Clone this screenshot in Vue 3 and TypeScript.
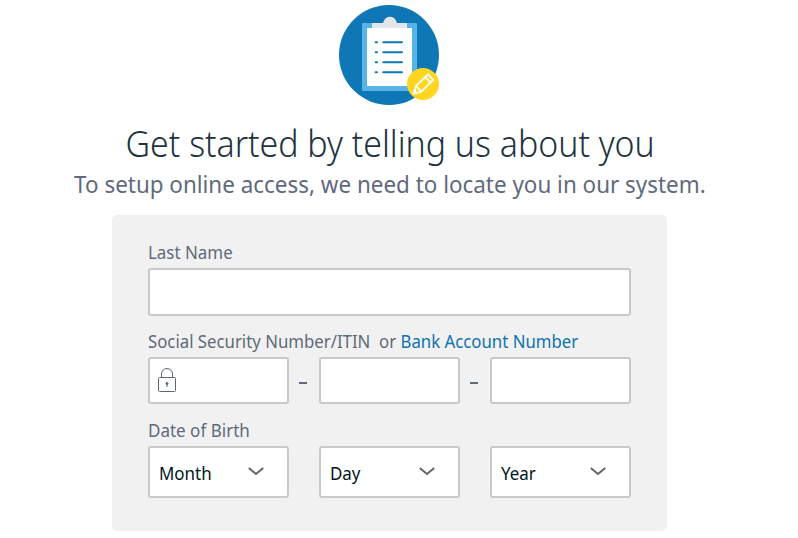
<script setup lang="ts">
import { ref } from 'vue'

const lastName = ref('')
const ssn = ref<string[]>(['', '', ''])
const dateParts: string[] = ['Month', 'Day', 'Year']
const listRows: number[] = [42, 52, 62, 72]
</script>

<template>
  <main class="page">
    <svg class="hero" viewBox="0 0 100 100" aria-hidden="true">
      <circle cx="50" cy="50" r="50" fill="#0f77b5" />
      <rect x="23" y="18" width="55" height="68" rx="1" fill="#57b4e9" />
      <rect x="28" y="23" width="45" height="58" fill="#fff" />
      <path d="M33 23V18H43.5C44.5 18 44.4 17 45 15.500A6.600 6.600 0 0 1 57 15.500C57.600 17 57.500 18 58.500 18H68V23Z" fill="#e4e5e8" />
      <g transform="translate(0 -5)" stroke="#0f77b5" stroke-width="2" stroke-linecap="round">
        <path v-for="y in listRows" :key="y" :d="`M36.700 ${y + 0.3}H38M44.300 ${y + 0.3}H63`" />
      </g>
      <circle cx="84" cy="79" r="16" fill="#ffd51f" />
      <g fill="none" stroke="#fff" stroke-width="1.800" stroke-linejoin="round">
        <path d="M74.500 88.700L77 80.800L89 69.500L94.200 74.800L82.300 86.600Z" />
        <path d="M77 80.800L82.300 86.600M86.300 72.200L91.500 77.500" />
        <path d="M74.500 88.700L75.500 85.700L77.500 87.900Z" fill="#fff" />
      </g>
    </svg>

    <h1 class="title"><span>Get started by telling us about you</span></h1>
    <p class="subtitle"><span>To setup online access, we need to locate you in our system.</span></p>

    <form class="card" @submit.prevent>
      <label class="label" for="last-name"><span class="t-last">Last Name</span></label>
      <input id="last-name" v-model="lastName" class="field" type="text" />

      <div class="label"><span class="t-ssn">Social Security Number/ITIN&nbsp; or <a class="link">Bank Account Number</a></span></div>
      <div class="row ssn">
        <template v-for="(_, i) in ssn" :key="i">
          <i v-if="i > 0" class="dash"></i>
          <div class="cell">
            <input v-model="ssn[i]" class="field" type="text" />
            <svg v-if="i === 0" class="lock" viewBox="0 0 18 25" aria-hidden="true">
              <rect x=".5" y="9.500" width="17" height="14" rx="1" />
              <path d="M3.500 9.500V6A5.500 5.500 0 0 1 14.500 6V9.500" />
              <path d="M9 15V19" />
              <circle cx="9" cy="15.500" r="1" fill="#5d6873" />
            </svg>
          </div>
        </template>
      </div>

      <div class="label"><span class="t-dob">Date of Birth</span></div>
      <div class="row dob">
        <button v-for="part in dateParts" :key="part" class="select" type="button">
          <span>{{ part }}</span>
          <svg viewBox="0 0 16 9" aria-hidden="true"><path d="M.8 1L8 7L15.200 1" /></svg>
        </button>
      </div>
    </form>
  </main>
</template>

<style>
body {
  background: #fff;
}
</style>

<style scoped>
.page {
  box-sizing: border-box;
  width: 779px;
  height: 538px;
  padding-top: 5px;
  display: flex;
  flex-direction: column;
  align-items: center;
  overflow: hidden;
  font-family: "Noto Sans", sans-serif;
}
.hero {
  width: 100px;
  height: 100px;
  margin-right: 1px;
  flex: none;
}
.title {
  margin: 15px 0 0 2px;
  height: 48px;
  line-height: 48px;
  font-size: 36px;
  font-weight: 300;
  color: #20323f;
  white-space: nowrap;
}
.title span,
.subtitle span,
.label > span {
  display: inline-block;
}
.title span {
  transform: scaleX(.941);
}
.subtitle span {
  transform: scaleX(.975);
}
.subtitle {
  margin: 0;
  height: 32px;
  line-height: 32px;
  font-size: 23px;
  color: #5f6a7d;
  white-space: nowrap;
}
.card {
  box-sizing: border-box;
  width: 555px;
  height: 316px;
  margin-top: 15px;
  padding: 25px 36px 0;
  background: #f1f1f1;
  border-radius: 5px;
}
.label {
  display: block;
  height: 28px;
  line-height: 24px;
  font-size: 18px;
  color: #5f6a7a;
  white-space: nowrap;
}
.label > span {
  transform: scaleX(.932);
  transform-origin: left center;
}
.label > .t-last {
  transform: scaleX(.94);
}
.label > .t-dob {
  transform: scaleX(.945);
}
.link {
  color: #0f72ae;
}
.field {
  display: block;
  box-sizing: border-box;
  width: 100%;
  height: 48px;
  margin: 0 0 13px;
  padding: 0 10px;
  border: 2px solid #c9c9c9;
  border-radius: 3px;
  background: #fff;
  font: inherit;
  outline: none;
}
.row {
  display: flex;
  justify-content: space-between;
  align-items: center;
}
.ssn {
  height: 47px;
  margin-bottom: 14px;
}
.cell {
  position: relative;
  width: 141px;
}
.cell .field {
  height: 47px;
  margin: 0;
}
.lock {
  position: absolute;
  left: 10px;
  top: 11px;
  width: 18px;
  height: 25px;
  fill: none;
  stroke: #5d6873;
  stroke-width: 1;
}
.dash {
  width: 8px;
  height: 2px;
  margin-top: 4px;
  margin-right: 2px;
  background: #5f6a7a;
}
.select {
  box-sizing: border-box;
  width: 141px;
  height: 52px;
  padding: 1px 22px 0 9px;
  display: flex;
  align-items: center;
  justify-content: space-between;
  border: 2px solid #c9c9c9;
  border-radius: 3px;
  background: #fff;
  color: #001520;
  font: 18px "Noto Sans", sans-serif;
}
.select span {
  transform: scaleX(.94);
  transform-origin: left center;
}
.select svg {
  width: 16px;
  height: 9px;
  margin-top: -3px;
  margin-right: 1px;
  fill: none;
  stroke: #656565;
  stroke-width: 2;
}
</style>
